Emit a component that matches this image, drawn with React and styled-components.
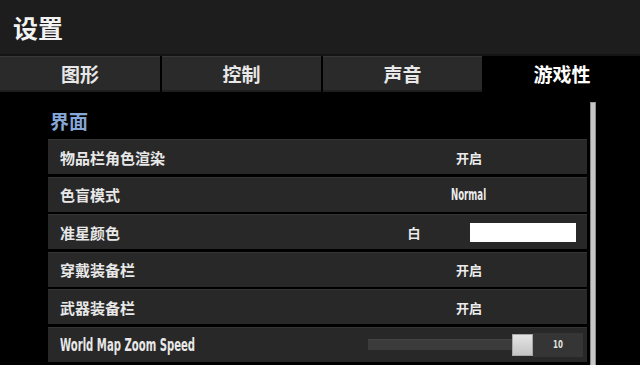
import React from "react";
import styled, { createGlobalStyle } from "styled-components";

const Global = createGlobalStyle`
  html, body { margin: 0; padding: 0; background: #000; }
  body { font-family: "DejaVu Sans Condensed", "Noto Sans CJK SC", sans-serif; }
  * { box-sizing: border-box; }
`;

const Screen = styled.div`
  width: 640px;
  height: 365px;
  background: #000;
  overflow: hidden;
  display: flex;
  flex-direction: column;
`;

const Header = styled.header`
  height: 56px;
  background: #1d1d1d;
  border-bottom: 2px solid #141414;
  display: flex;
  align-items: center;
  padding-left: 13px;
`;

const Title = styled.h1`
  margin: 0;
  font-family: "Noto Sans CJK SC", sans-serif;
  font-weight: 700;
  font-size: 25px;
  line-height: 1;
  color: #f2f2f2;
`;

const TabBar = styled.nav`
  height: 36px;
  display: grid;
  grid-template-columns: 160px 159px 159px 1fr;
  gap: 2px;
  background: #000;
`;

const Tab = styled.div`
  display: flex;
  align-items: center;
  justify-content: center;
  font-family: "Noto Sans CJK SC", sans-serif;
  font-weight: 700;
  font-size: 19px;
  color: ${(p) => (p.$active ? "#ffffff" : "#e8e8e8")};
  background: ${(p) => (p.$active ? "#000" : "#2a2a2a")};
  border-top: 1px solid ${(p) => (p.$active ? "#000" : "#383838")};
  border-bottom: 2px solid ${(p) => (p.$active ? "#000" : "#1e1e1e")};
`;

const Body = styled.div`
  flex: 1;
  display: flex;
  padding-left: 48px;
`;

const Content = styled.section`
  width: 539px;
  padding-top: 17px;
`;

const SectionTitle = styled.h2`
  margin: 0 0 6px 2px;
  font-family: "Noto Sans CJK SC", sans-serif;
  font-weight: 700;
  font-size: 19px;
  line-height: 24px;
  color: #87a7d6;
`;

const Row = styled.div`
  height: 35px;
  margin-bottom: 2.5px;
  display: flex;
  align-items: center;
  background: #282828;
  border-top: 1px solid #343434;
`;

const Label = styled.div`
  flex: 1;
  padding-left: 12px;
  font-family: "Noto Sans CJK SC", sans-serif;
  font-weight: 700;
  font-size: 15px;
  color: #e8e8e8;
`;

/* narrow bold Latin text, like the game's condensed face */
const Narrow = styled.span`
  display: inline-block;
  font-family: "DejaVu Sans Condensed", sans-serif;
  font-weight: 700;
  font-size: ${(p) => p.$size}px;
  transform: scaleX(${(p) => p.$scale});
  transform-origin: ${(p) => p.$origin || "center"};
  white-space: nowrap;
`;

const ValueCell = styled.div`
  width: 222px;
  margin-right: 7px;
  display: flex;
  align-items: center;
  justify-content: ${(p) => (p.$split ? "flex-start" : "center")};
  font-family: "Noto Sans CJK SC", sans-serif;
  font-weight: 700;
  font-size: 13px;
  color: #ececec;
`;

const Letter = styled.span`
  width: 112px;
  text-align: center;
`;

const ColorSwatch = styled.div`
  width: 106px;
  height: 19px;
  background: ${(p) => p.$color};
`;

const SliderCell = styled.div`
  width: 215px;
  margin-right: 4px;
  display: flex;
  align-items: center;
`;

const Track = styled.div`
  width: 144px;
  height: 11px;
  background: #3b3b3b;
  border-top: 1px solid #444;
`;

const Thumb = styled.div`
  width: 21px;
  height: 22px;
  background: linear-gradient(#e4e4e4, #c4c4c4);
  border: 1px solid #a8a8a8;
`;

const SliderValue = styled.div`
  width: 50px;
  height: 24px;
  background: #353535;
  display: flex;
  align-items: center;
  justify-content: center;
  color: #e0e0e0;
`;

const Scrollbar = styled.div`
  width: 6px;
  margin-left: 3px;
  margin-top: 10px;
  background: #c6c6c6;
  border-left: 1px solid #8c8c8c;
  border-right: 1px solid #8c8c8c;
  border-top: 1px solid #9a9a9a;
`;

const tabs = ["图形", "控制", "声音", "游戏性"];

const rows = [
  { label: "物品栏角色渲染", value: "开启" },
  { label: "色盲模式", value: "Normal", latin: true },
  { label: "准星颜色", color: { name: "白", hex: "#ffffff" } },
  { label: "穿戴装备栏", value: "开启" },
  { label: "武器装备栏", value: "开启" },
  { label: "World Map Zoom Speed", slider: 10, latinLabel: true },
];

export default function App() {
  return (
    <>
      <Global />
      <Screen>
        <Header>
          <Title>设置</Title>
        </Header>
        <TabBar>
          {tabs.map((t, i) => (
            <Tab key={t} $active={i === 3}>
              {t}
            </Tab>
          ))}
        </TabBar>
        <Body>
          <Content>
            <SectionTitle>界面</SectionTitle>
            {rows.map((r) => (
              <Row key={r.label}>
                <Label>
                  {r.latinLabel ? (
                    <Narrow $size={17} $scale={0.66} $origin="left">
                      {r.label}
                    </Narrow>
                  ) : (
                    r.label
                  )}
                </Label>
                {r.slider !== undefined ? (
                  <SliderCell>
                    <Track />
                    <Thumb />
                    <SliderValue>
                      <Narrow $size={11} $scale={0.72}>
                        {r.slider}
                      </Narrow>
                    </SliderValue>
                  </SliderCell>
                ) : r.color ? (
                  <ValueCell $split>
                    <Letter>{r.color.name}</Letter>
                    <ColorSwatch $color={r.color.hex} />
                  </ValueCell>
                ) : (
                  <ValueCell>
                    {r.latin ? (
                      <Narrow $size={15} $scale={0.64}>
                        {r.value}
                      </Narrow>
                    ) : (
                      r.value
                    )}
                  </ValueCell>
                )}
              </Row>
            ))}
          </Content>
          <Scrollbar />
        </Body>
      </Screen>
    </>
  );
}
